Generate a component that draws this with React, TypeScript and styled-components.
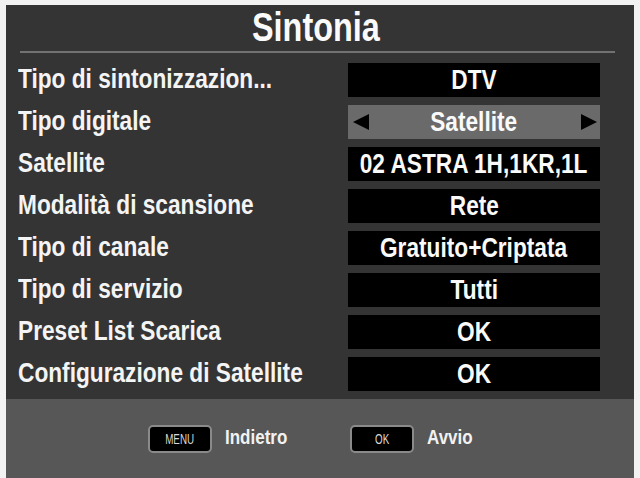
import styled, { createGlobalStyle } from "styled-components";

const GlobalStyle = createGlobalStyle`
	html, body {
		margin: 0;
		padding: 0;
		background: #f2f2f2;
		font-family: "Liberation Sans", Arial, sans-serif;
	}
`;

const rows = [
	{ label: "Tipo di sintonizzazion...", value: "DTV" },
	{ label: "Tipo digitale", value: "Satellite", selected: true },
	{ label: "Satellite", value: "02 ASTRA 1H,1KR,1L" },
	{ label: "Modalità di scansione", value: "Rete" },
	{ label: "Tipo di canale", value: "Gratuito+Criptata" },
	{ label: "Tipo di servizio", value: "Tutti" },
	{ label: "Preset List Scarica", value: "OK" },
	{ label: "Configurazione di Satellite", value: "OK" },
];

const hints = [
	{ key: "MENU", text: "Indietro", width: 62 },
	{ key: "OK", text: "Avvio", width: 48 },
];

const App = () => {
	return (
		<>
			<GlobalStyle />
			<Panel>
				<Title>
					<Narrow>Sintonia</Narrow>
				</Title>
				<Divider />
				<List>
					{rows.map((row) => (
						<Row key={row.label}>
							<Label>
								<Narrow origin="left">{row.label}</Narrow>
							</Label>
							<ValueBox selected={!!row.selected}>
								{row.selected && <Arrow side="left" />}
								<Narrow>{row.value}</Narrow>
								{row.selected && <Arrow side="right" />}
							</ValueBox>
						</Row>
					))}
				</List>
				<Footer>
					{hints.map((hint) => (
						<Hint key={hint.key}>
							<Key>
								<KeyText>{hint.key}</KeyText>
							</Key>
							<HintText width={hint.width}>
								<Narrow origin="left">{hint.text}</Narrow>
							</HintText>
						</Hint>
					))}
				</Footer>
			</Panel>
		</>
	);
};

// the TV menu font is a condensed grotesque, squeeze Liberation Sans to match
const Narrow = styled.span<{ origin?: string }>`
	display: inline-block;
	transform: scaleX(0.81);
	transform-origin: ${(props) => props.origin || "center"};
`;

const Panel = styled.div`
	display: flex;
	flex-direction: column;
	width: 628px;
	height: 473px;
	margin: 5px 0 0 6px;
	background: #343434;
	box-sizing: border-box;
`;

const Title = styled.h1`
	margin: 0;
	height: 46px;
	line-height: 44px;
	padding-right: 9px;
	text-align: center;
	font-size: 40px;
	font-weight: 700;
	color: #fafafa;
`;

const Divider = styled.div`
	height: 2px;
	margin: 0 19px 0 14px;
	background: #727272;
`;

const List = styled.div`
	display: flex;
	flex-direction: column;
	gap: 8px;
	padding: 10px 0 0 12px;
`;

const Row = styled.div`
	display: grid;
	grid-template-columns: 330px 252px;
	align-items: center;
	height: 34px;
`;

const Label = styled.div`
	font-size: 28px;
	line-height: 34px;
	font-weight: 700;
	color: #f4f4f4;
	white-space: nowrap;
	margin-top: -3px;
`;

interface IValueBox {
	selected: boolean;
}

const ValueBox = styled.div<IValueBox>`
	position: relative;
	display: flex;
	align-items: center;
	justify-content: center;
	height: 34px;
	line-height: 34px;
	background: ${(props) => (props.selected ? "#6a6a6a" : "#000")};
	color: #fafafa;
	font-size: 28px;
	font-weight: 700;
	white-space: nowrap;
`;

interface IArrow {
	side: "left" | "right";
}

const Arrow = styled.i<IArrow>`
	position: absolute;
	top: 9px;
	${(props) => (props.side === "left" ? "left: 5px;" : "right: 3px;")}
	width: 0;
	height: 0;
	border-top: 8px solid transparent;
	border-bottom: 8px solid transparent;
	${(props) =>
		props.side === "left"
			? "border-right: 16px solid #000;"
			: "border-left: 16px solid #000;"}
`;

const Footer = styled.div`
	margin-top: auto;
	height: 79px;
	display: flex;
	align-items: center;
	gap: 63px;
	padding-left: 142px;
	background: #575757;
`;

const Hint = styled.div`
	display: flex;
	align-items: center;
	gap: 13px;
`;

const Key = styled.div`
	display: flex;
	align-items: center;
	justify-content: center;
	width: 60px;
	height: 24px;
	background: #000;
	border: 2px solid #8a8a8a;
	border-radius: 5px;
`;

const KeyText = styled.span`
	display: inline-block;
	transform: scaleX(0.7);
	font-size: 14px;
	color: #d8d8d8;
`;

interface IHintText {
	width: number;
}

const HintText = styled.span<IHintText>`
	width: ${(props) => props.width}px;
	font-size: 21px;
	font-weight: 700;
	color: #f2f2f2;
	white-space: nowrap;
	margin-top: -4px;
`;

export default App;
